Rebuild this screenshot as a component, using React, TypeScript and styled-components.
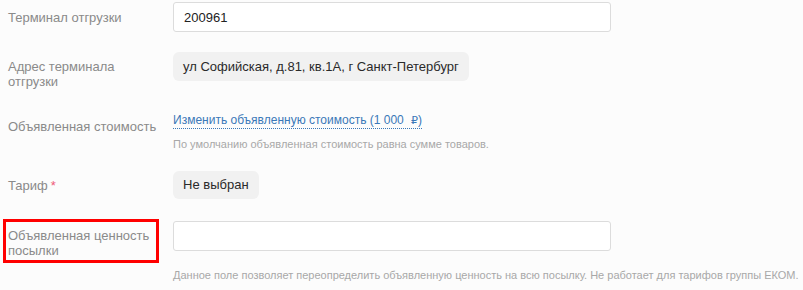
import styled, { createGlobalStyle } from "styled-components";

const GlobalStyle = createGlobalStyle`
  html, body {
    margin: 0;
    background: #fcfcfc;
    font-family: "Liberation Sans", Arial, sans-serif;
  }
`;

const Form = styled.div`
  display: flex;
  flex-direction: column;
  padding: 2px 0 0 8px;
`;

const Row = styled.div<{ $gap: number; $align?: string }>`
  display: grid;
  grid-template-columns: 165px 438px;
  align-items: ${(p) => p.$align ?? "center"};
  margin-top: ${(p) => p.$gap}px;
`;

const Label = styled.div<{ $offset?: number; $highlighted?: boolean }>`
  font-size: 13px;
  line-height: 15px;
  color: #8a8a8a;
  padding-top: ${(p) => p.$offset ?? 0}px;
  ${(p) =>
    p.$highlighted &&
    `
    margin-left: -5px;
    width: 148px;
    padding: 6px 0 2px 2px;
    border: 3px solid #f00;
    `}
`;

const Required = styled.span`
  color: #ee5a78;
  margin-left: 3px;
`;

const Value = styled.div`
  display: flex;
  flex-direction: column;
  align-items: flex-start;
`;

const Input = styled.input`
  box-sizing: border-box;
  width: 438px;
  height: 30px;
  padding: 0 10px;
  border: 1px solid #dcdcdc;
  border-radius: 3px;
  background: #fff;
  font-family: inherit;
  font-size: 13px;
  color: #222;
  outline: none;
`;

const Chip = styled.div<{ $height: number }>`
  height: ${(p) => p.$height}px;
  line-height: ${(p) => p.$height}px;
  padding: 0 10px;
  border-radius: 6px;
  background: #f1f1f1;
  font-size: 13px;
  color: #2a2a2a;
`;

const DottedLink = styled.a`
  font-size: 12px;
  line-height: 14px;
  color: #3a78b8;
  text-decoration: none;
  border-bottom: 1px dotted #3a78b8;
  cursor: pointer;
`;

const Rub = styled.span`
  font-family: "DejaVu Sans", sans-serif;
  font-size: 11px;
  margin-left: 4px;
`;

const Hint = styled.div<{ $gap: number }>`
  margin-top: ${(p) => p.$gap}px;
  font-size: 11px;
  line-height: 13px;
  color: #a8a8a8;
  white-space: nowrap;
`;

export default function App() {
  return (
    <>
      <GlobalStyle />
      <Form>
        <Row $gap={0}>
          <Label>Терминал отгрузки</Label>
          <Input defaultValue="200961" />
        </Row>

        <Row $gap={20} $align="start">
          <Label $offset={7}>
            Адрес терминала
            <br />
            отгрузки
          </Label>
          <Value>
            <Chip $height={29}>ул Софийская, д.81, кв.1А, г Санкт-Петербург</Chip>
          </Value>
        </Row>

        <Row $gap={24} $align="start">
          <Label $offset={6}>Объявленная стоимость</Label>
          <Value>
            <DottedLink>
              Изменить объявленную стоимость (1 000 <Rub>₽</Rub>)
            </DottedLink>
            <Hint $gap={9}>По умолчанию объявленная стоимость равна сумме товаров.</Hint>
          </Value>
        </Row>

        <Row $gap={20}>
          <Label>
            Тариф<Required>*</Required>
          </Label>
          <Value>
            <Chip $height={28}>Не выбран</Chip>
          </Value>
        </Row>

        <Row $gap={20} $align="start">
          <Label $highlighted>
            Объявленная ценность
            <br />
            посылки
          </Label>
          <Value>
            <Input style={{ marginTop: 2 }} />
            <Hint $gap={18}>
              Данное поле позволяет переопределить объявленную ценность на всю посылку. Не работает для тарифов группы ЕКОМ.
            </Hint>
          </Value>
        </Row>
      </Form>
    </>
  );
}
